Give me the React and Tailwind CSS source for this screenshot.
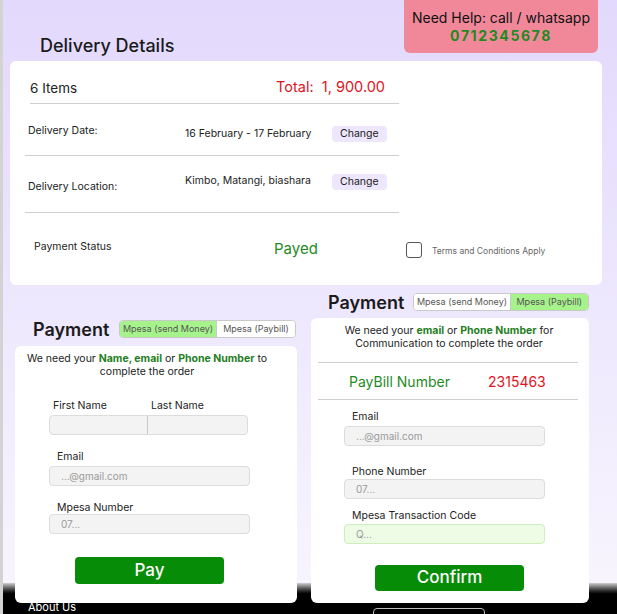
import React, { useState } from 'react';

const Toggle = ({ active, onChange }) => (
  <div className="flex h-[18px] rounded-[4px] border border-[#c9c9c9] overflow-hidden text-[9px] text-[#555] bg-white">
    <button
      type="button"
      onClick={() => onChange('send')}
      className={`w-[96px] flex items-center justify-center ${active === 'send' ? 'bg-[#a6f38c]' : 'bg-white'}`}
    >
      Mpesa (send Money)
    </button>
    <button
      type="button"
      onClick={() => onChange('paybill')}
      className={`w-[79px] flex items-center justify-center border-l border-[#c9c9c9] ${active === 'paybill' ? 'bg-[#a6f38c]' : 'bg-white'}`}
    >
      Mpesa (Paybill)
    </button>
  </div>
);

const Field = ({ label, placeholder, green, className = '', gap = 'mb-[3px]' }) => (
  <div className={className}>
    <label className={`block text-[10.5px] leading-[13px] text-[#222] pl-[8px] ${gap}`}>{label}</label>
    <input
      className={`block w-[201px] h-[20px] rounded-[4px] border px-[11px] text-[10px] outline-none ${green ? 'bg-[#eefce6] border-[#cdeebd]' : 'bg-[#f3f3f3] border-[#dcdcdc]'} placeholder:text-[#9a9a9a]`}
      placeholder={placeholder}
    />
  </div>
);

const App = () => {
  const [method, setMethod] = useState('send');

  return (
    <div className="min-h-[614px] overflow-hidden border-l-[3px] border-[#d3d3d3] bg-gradient-to-b from-[#e3d9fc] to-[#f9f7fe]" style={{ fontFamily: 'Inter, "Noto Sans", sans-serif' }}>
      {/* Top row */}
      <div className="flex items-start justify-between h-[61px]">
        <h1 className="ml-[37px] mt-[35px] text-[18px] font-medium text-[#1a1a1a] leading-[22px]">Delivery Details</h1>
        <div className="mr-[19px] w-[194px] h-[53px] rounded-b-[6px] bg-[#f0889a] flex flex-col items-center justify-center pt-[1px]">
          <span className="text-[14px] text-[#111] leading-[18px]">Need Help: call / whatsapp</span>
          <span className="text-[14px] font-bold tracking-[1.6px] text-[#1f8a1f] leading-[18px]">0712345678</span>
        </div>
      </div>

      {/* Delivery card */}
      <div className="ml-[7px] mr-[15px] h-[224px] bg-white rounded-[6px] pl-[15px]">
        <div className="w-[374px] text-[#222]">
          <div className="ml-[5px] h-[43px] pt-[12px] flex items-center justify-between border-b border-[#cfcfcf] pr-[14px]">
            <span className="text-[13.5px]">6 Items</span>
            <span className="text-[14.5px] text-[#e0141e] -mt-[3px] ml-[3px]">Total:&nbsp; 1, 900.00</span>
          </div>
          <div className="h-[52px] pt-[6px] flex items-center border-b border-[#cfcfcf] text-[10.5px]">
            <span className="w-[160px] pl-[3px] -mt-[4px]">Delivery Date:</span>
            <span className="w-[147px] pt-[2px]">16 February - 17 February</span>
            <span className="mt-[2px] h-[16px] px-[8px] rounded-[4px] bg-[#ede6fc] flex items-center">Change</span>
          </div>
          <div className="h-[57px] flex items-center border-b border-[#cfcfcf] text-[10.5px]">
            <span className="w-[160px] pl-[3px] mt-[5px]">Delivery Location:</span>
            <span className="w-[147px] -mt-[7px]">Kimbo, Matangi, biashara</span>
            <span className="-mt-[5px] h-[16px] px-[8px] rounded-[4px] bg-[#ede6fc] flex items-center">Change</span>
          </div>
        </div>
        <div className="h-[71px] flex items-center text-[10.5px] text-[#222]">
          <span className="w-[249px] pl-[9px] -mt-[3px]">Payment Status</span>
          <span className="w-[132px] text-[15px] text-[#1f8a1f] mt-[2px]">Payed</span>
          <span className="w-[16px] h-[16px] rounded-[3px] border border-[#555] mt-[2px]"></span>
          <span className="ml-[10px] text-[8.5px] text-[#666] mt-[5px]">Terms and Conditions Apply</span>
        </div>
      </div>

      {/* Payment section */}
      <div className="relative z-10 flex items-end mt-[8px] ml-[12px]">
        {/* Send money */}
        <div className="w-[282px]">
          <div className="flex items-center h-[18px] mb-[8px]">
            <h2 className="ml-[18px] w-[86px] text-[18px] font-semibold text-[#1a1a1a]">Payment</h2>
            <Toggle active={method === 'paybill' ? 'send' : 'send'} onChange={setMethod} />
          </div>
          <div className="h-[257px] bg-white rounded-[6px] pt-[6px]">
            <p className="pr-[18px] text-center text-[10.5px] leading-[13px] text-[#222]">
              We need your <b className="text-[#1f7f1f]">Name, email</b> or <b className="text-[#1f7f1f]">Phone Number</b> to<br />complete the order
            </p>
            <div className="ml-[34px] mt-[21px]">
              <div className="flex text-[10.5px] leading-[13px] text-[#222] mb-[3px]">
                <span className="w-[102px] pl-[4px]">First Name</span>
                <span>Last Name</span>
              </div>
              <div className="flex w-[199px] h-[20px] rounded-[4px] border border-[#dcdcdc] bg-[#f3f3f3] overflow-hidden">
                <input className="w-[98px] h-full bg-transparent border-r border-[#c9c9c9] outline-none" />
                <input className="flex-1 h-full bg-transparent outline-none" />
              </div>
              <Field label="Email" placeholder="...@gmail.com" className="mt-[15px]" />
              <Field label="Mpesa Number" placeholder="07..." className="mt-[15px]" gap="mb-[0px]" />
            </div>
            <button className="block ml-[60px] mt-[23px] w-[149px] h-[27px] rounded-[4px] bg-[#078c07] text-white text-[17px] font-medium">Pay</button>
          </div>
        </div>

        {/* Paybill */}
        <div className="ml-[14px] w-[278px]">
          <div className="flex items-center h-[18px] mb-[7px]">
            <h2 className="ml-[17px] w-[86px] text-[18px] font-semibold text-[#1a1a1a]">Payment</h2>
            <Toggle active="paybill" onChange={setMethod} />
          </div>
          <div className="h-[285px] bg-white rounded-[6px] pt-[6px]">
            <p className="pr-[2px] text-center text-[10.5px] leading-[13px] text-[#222]">
              We need your <b className="text-[#1f7f1f]">email</b> or <b className="text-[#1f7f1f]">Phone Number</b> for<br />Communication to complete the order
            </p>
            <div className="ml-[7px] mr-[11px] mt-[12px] h-[38px] border-y border-[#cfcfcf] flex items-center text-[14px]">
              <span className="ml-[31px] w-[139px] text-[#1f8a1f]">PayBill Number</span>
              <span className="text-[#e0141e]">2315463</span>
            </div>
            <div className="ml-[33px]">
              <Field label="Email" placeholder="...@gmail.com" className="mt-[10px]" />
              <Field label="Phone Number" placeholder="07..." className="mt-[19px]" gap="mb-[1px]" />
              <Field label="Mpesa Transaction Code" placeholder="Q..." green className="mt-[10px]" gap="mb-[2px]" />
            </div>
            <button className="block ml-[64px] mt-[21px] w-[149px] h-[26px] rounded-[4px] bg-[#078c07] text-white text-[17px] font-medium">Confirm</button>
          </div>
        </div>
      </div>

      {/* Footer */}
      <footer className="-mt-[20px]">
        <div className="h-[12px] bg-gradient-to-b from-[#d0d0d0] to-black"></div>
        <div className="bg-black h-[40px] flex items-start">
          <span className="ml-[25px] mt-[4px] text-[11px] text-white">About Us</span>
          <span className="ml-[297px] mt-[13px] w-[112px] h-[20px] rounded-[4px] border border-[#bbb]"></span>
        </div>
      </footer>
    </div>
  );
};

export default App;
